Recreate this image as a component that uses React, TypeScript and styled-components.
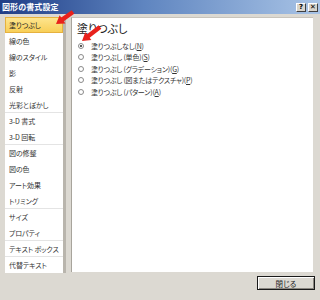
import React from "react";
import styled, { createGlobalStyle } from "styled-components";

const Global = createGlobalStyle`
  html, body { margin: 0; padding: 0; background: #dcd8d0; }
  * { box-sizing: border-box; }
`;

const Window = styled.div`
  position: relative;
  width: 320px;
  height: 300px;
  display: flex;
  flex-direction: column;
  background: #dcd9d2;
  font-family: "Noto Sans CJK JP", "Noto Sans", sans-serif;
  font-feature-settings: "palt";
  color: #2a2a2a;
  overflow: hidden;
`;

const TitleBar = styled.div`
  height: 14px;
  flex: none;
  display: flex;
  align-items: center;
  justify-content: space-between;
  padding: 0 2px 0 2px;
  background: linear-gradient(to right, #1f3d86 0%, #5f85c0 45%, #a9c4e6 100%);
`;

const Title = styled.span`
  color: #ffffff;
  font-size: 8px;
  font-weight: 700;
  line-height: 14px;
  letter-spacing: 0.1px;
`;

const TitleButtons = styled.div`
  display: flex;
  gap: 2px;
`;

const TitleButton = styled.div`
  width: 10px;
  height: 9px;
  background: #d8d4cc;
  border: 1px solid;
  border-color: #ffffff #404040 #404040 #ffffff;
  display: flex;
  align-items: center;
  justify-content: center;
  font-family: "DejaVu Sans", sans-serif;
  font-size: 7px;
  font-weight: 700;
  line-height: 1;
  color: #000;
`;

const Body = styled.div`
  flex: none;
  height: 259px;
  display: flex;
  gap: 5px;
  padding: 3px 7px 0 5px;
`;

const List = styled.div`
  width: 61px;
  height: 256px;
  background: #ffffff;
  border-right: 3px solid #b9b5ad;
  display: flex;
  flex-direction: column;
`;

const Item = styled.div<{ $selected?: boolean; $sep?: boolean }>`
  height: 16px;
  flex: none;
  display: flex;
  align-items: center;
  padding-left: 4px;
  font-size: 7px;
  letter-spacing: -0.1px;
  white-space: nowrap;
  color: #333;
  border-bottom: 1px solid ${(p) => (p.$sep ? "#e4e4e4" : "transparent")};
  ${(p) =>
    p.$selected &&
    `
    background: linear-gradient(#fde58e, #f8cf58);
    border: 1px solid #e6b13e;
    padding-left: 3px;
    color: #222;
  `}
`;

const Panel = styled.div`
  flex: 1;
  height: 255px;
  background: #ffffff;
  border-left: 1px solid #a8a49c;
  border-top: 1px solid #c8c4bc;
  padding: 3px 5px 0 5px;
  display: flex;
  flex-direction: column;
`;

const Heading = styled.div`
  font-size: 11px;
  line-height: 14px;
  color: #222;
  margin-bottom: 5px;
`;

const Options = styled.div`
  display: flex;
  flex-direction: column;
`;

const Option = styled.div`
  height: 11.5px;
  display: flex;
  align-items: center;
  gap: 7px;
  font-size: 7px;
  letter-spacing: -0.2px;
  white-space: nowrap;
  color: #333;
`;

const Radio = styled.span<{ $checked?: boolean }>`
  width: 6px;
  height: 6px;
  margin-left: 1px;
  border-radius: 50%;
  border: 1px solid #8a8a8a;
  background: #fff;
  display: flex;
  align-items: center;
  justify-content: center;
  &::after {
    content: "";
    width: 2px;
    height: 2px;
    border-radius: 50%;
    background: ${(p) => (p.$checked ? "#222" : "transparent")};
  }
`;

const Key = styled.span`
  text-decoration: underline;
`;

const Footer = styled.div`
  flex: 1;
  display: flex;
  justify-content: flex-end;
  align-items: flex-start;
  padding: 3px 5px 0 0;
`;

const CloseButton = styled.div`
  width: 58px;
  height: 14px;
  border: 1px solid #1a1a1a;
  box-shadow: inset 1px 1px 0 #ffffff, inset -1px -1px 0 #8a8680;
  background: #dcd9d2;
  display: flex;
  align-items: center;
  justify-content: center;
  font-size: 7.5px;
  color: #222;
`;

const ArrowLayer = styled.svg`
  position: absolute;
  left: 0;
  top: 0;
  pointer-events: none;
`;

const Arrow = ({ x1, y1, x2, y2 }: { x1: number; y1: number; x2: number; y2: number }) => {
  const dx = x2 - x1;
  const dy = y2 - y1;
  const len = Math.hypot(dx, dy);
  const ux = dx / len;
  const uy = dy / len;
  const nx = -uy;
  const ny = ux;
  const head = 8;
  const hw = 5;
  const sw = 2.2;
  const bx = x2 - ux * head;
  const by = y2 - uy * head;
  const pts = [
    [x1 + nx * sw, y1 + ny * sw],
    [bx + nx * sw, by + ny * sw],
    [bx + nx * hw, by + ny * hw],
    [x2, y2],
    [bx - nx * hw, by - ny * hw],
    [bx - nx * sw, by - ny * sw],
    [x1 - nx * sw, y1 - ny * sw],
  ]
    .map((p) => p.join(","))
    .join(" ");
  return <polygon points={pts} fill="#e8211c" />;
};

const items: { label: string; sep?: boolean }[] = [
  { label: "塗りつぶし" },
  { label: "線の色" },
  { label: "線のスタイル" },
  { label: "影" },
  { label: "反射" },
  { label: "光彩とぼかし", sep: true },
  { label: "3-D 書式" },
  { label: "3-D 回転", sep: true },
  { label: "図の修整" },
  { label: "図の色" },
  { label: "アート効果" },
  { label: "トリミング", sep: true },
  { label: "サイズ" },
  { label: "プロパティ", sep: true },
  { label: "テキスト ボックス", sep: true },
  { label: "代替テキスト" },
];

const options = [
  { text: "塗りつぶしなし", key: "N", checked: true },
  { text: "塗りつぶし (単色)", key: "S" },
  { text: "塗りつぶし (グラデーション)", key: "G" },
  { text: "塗りつぶし (図またはテクスチャ)", key: "P" },
  { text: "塗りつぶし (パターン)", key: "A" },
];

export default function App() {
  return (
    <>
      <Global />
      <Window>
        <TitleBar>
          <Title>図形の書式設定</Title>
          <TitleButtons>
            <TitleButton>?</TitleButton>
            <TitleButton>✕</TitleButton>
          </TitleButtons>
        </TitleBar>
        <Body>
          <List>
            {items.map((it, i) => (
              <Item key={it.label} $selected={i === 0} $sep={it.sep}>
                {it.label}
              </Item>
            ))}
          </List>
          <Panel>
            <Heading>塗りつぶし</Heading>
            <Options>
              {options.map((o) => (
                <Option key={o.key}>
                  <Radio $checked={o.checked} />
                  <span>
                    {o.text}(<Key>{o.key}</Key>)
                  </span>
                </Option>
              ))}
            </Options>
          </Panel>
        </Body>
        <Footer>
          <CloseButton>閉じる</CloseButton>
        </Footer>
        <ArrowLayer width="320" height="300" viewBox="0 0 320 300">
          <Arrow x1={73} y1={12} x2={56} y2={24} />
          <Arrow x1={100} y1={27} x2={82} y2={41} />
        </ArrowLayer>
      </Window>
    </>
  );
}
